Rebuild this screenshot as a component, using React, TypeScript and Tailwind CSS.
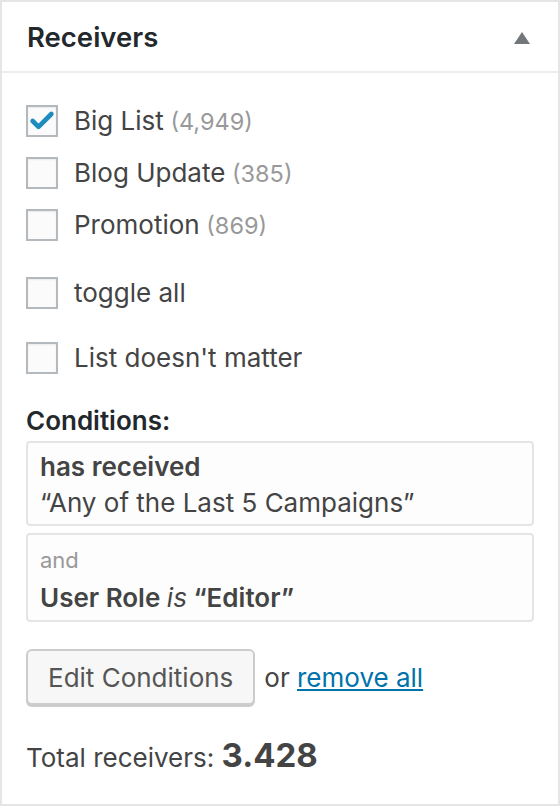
import { Check } from "lucide-react"

type ListItem = { name: string; count?: string; checked?: boolean }

const lists: ListItem[] = [
  { name: "Big List", count: "4,949", checked: true },
  { name: "Blog Update", count: "385" },
  { name: "Promotion", count: "869" },
]

function Box({ checked }: { checked?: boolean }) {
  return (
    <span className="flex h-8 w-8 shrink-0 items-center justify-center border-2 border-[#b4b9be] bg-[#fbfbfb] shadow-[inset_0_1px_2px_rgba(0,0,0,0.07)]">
      {checked && <Check className="h-7 w-7 text-[#1e8cbe]" strokeWidth={4} />}
    </span>
  )
}

function Row({ item, className = "" }: { item: ListItem; className?: string }) {
  return (
    <label className={`flex items-center gap-4 ${className}`}>
      <Box checked={item.checked} />
      <span className="text-[26px] leading-none text-[#444]">
        {item.name}
        {item.count && <span className="text-[23.5px] text-[#999]"> ({item.count})</span>}
      </span>
    </label>
  )
}

export default function App() {
  return (
    <div className="h-[806px] w-[560px] border-2 border-[#e5e5e5] bg-white font-['Inter',sans-serif] text-[#444]">
      <div className="flex h-[71px] items-center justify-between border-b-2 border-[#eee] pl-[25px] pr-[28px]">
        <h2 className="mt-[3px] text-[27.5px] font-semibold text-[#23282d]">Receivers</h2>
        <svg width="16" height="12" viewBox="0 0 16 12" className="mt-[2px]">
          <path d="M8 0 L16 12 L0 12 Z" fill="#72777c" />
        </svg>
      </div>

      <div className="px-[24px] pt-[32px]">
        <div className="flex flex-col gap-[20px]">
          {lists.map((l) => (
            <Row key={l.name} item={l} />
          ))}
        </div>
        <Row item={{ name: "toggle all" }} className="mt-[36px]" />
        <Row item={{ name: "List doesn't matter" }} className="mt-[33px]" />

        <p className="mt-[34px] text-[26px] font-semibold leading-none text-[#23282d]">Conditions:</p>
        <div className="mt-[7px] flex flex-col gap-[7px]">
          <div className="rounded-[4px] border-2 border-[#e5e5e5] bg-[#fdfdfd] px-[12px] pb-[3px] pt-[6px] text-[26px] leading-[36px]">
            <div className="font-semibold">has received</div>
            <div>“Any of the Last 5 Campaigns”</div>
          </div>
          <div className="rounded-[4px] border-2 border-[#e5e5e5] bg-[#fdfdfd] px-[12px] pb-[4px] pt-[7px] text-[26px] leading-[37px]">
            <div className="text-[22px] text-[#999]">and</div>
            <div className="font-semibold">
              User Role <em className="font-normal">is</em> “Editor”
            </div>
          </div>
        </div>

        <div className="mt-[27px] flex items-center gap-[9px]">
          <button className="h-[56px] rounded-[6px] border-2 border-[#ccc] bg-[#f7f7f7] px-[20px] text-[26px] text-[#555] shadow-[0_2px_0_#ccc]">
            Edit Conditions
          </button>
          <span className="text-[26px]">
            or{" "}
            <a href="#" className="text-[#0073aa] underline">
              remove all
            </a>
          </span>
        </div>

        <p className="mt-[30px] text-[26px] leading-[40px]">
          Total receivers: <strong className="text-[33px] font-bold">3.428</strong>
        </p>
      </div>
    </div>
  )
}
